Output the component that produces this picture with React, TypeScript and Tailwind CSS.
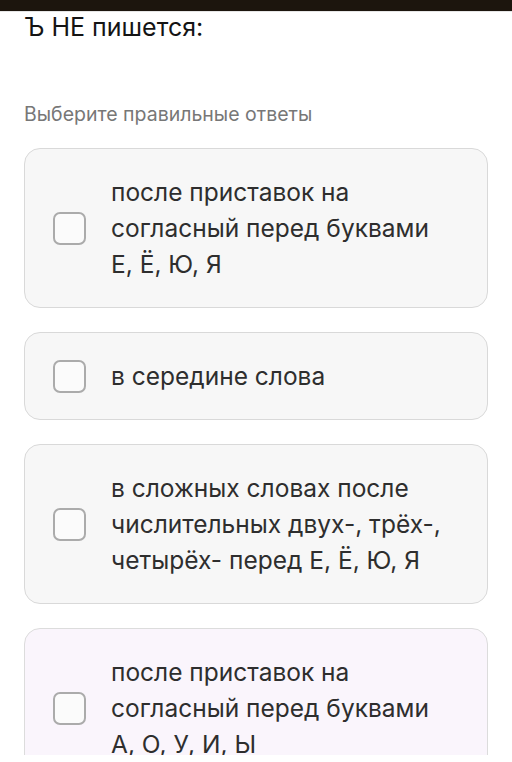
import React from "react";

interface Option {
  id: number;
  text: string;
  tinted?: boolean;
}

const options: Option[] = [
  { id: 1, text: "после приставок на согласный перед буквами Е, Ё, Ю, Я" },
  { id: 2, text: "в середине слова" },
  { id: 3, text: "в сложных словах после числительных двух-, трёх-, четырёх- перед Е, Ё, Ю, Я" },
  { id: 4, text: "после приставок на согласный перед буквами А, О, У, И, Ы", tinted: true },
];

const App: React.FC = () => {
  return (
    <div
      className="w-[512px] h-[762px] bg-white"
      style={{ fontFamily: "Inter, 'Noto Sans', sans-serif" }}
    >
      {/* status bar strip */}
      <div className="h-[11px] bg-[#1c150d]" />
      <div className="h-px bg-[#e6e6e6]" />

      <div className="h-[743px] overflow-hidden px-6">
        <h1 className="text-[25px] leading-[30px] text-[#141414]">Ъ НЕ пишется:</h1>

        <p className="mt-[60px] text-[19.5px] leading-[24px] text-[#777777]">Выберите правильные ответы</p>

        <div className="mt-[22px] flex flex-col gap-6">
          {options.map((o) => (
            <div
              key={o.id}
              className={`flex items-center rounded-2xl border pl-[28px] pr-6 py-[25px] ${
                o.tinted ? "bg-[#faf5fc] border-[#dcdcdc]" : "bg-[#f7f7f7] border-[#d9d9d9]"
              }`}
            >
              <div className="w-[33px] h-[33px] shrink-0 rounded-[7px] border-[2.5px] border-[#ababab] bg-[#fbfbfb]" />
              <div className="ml-[25px] min-h-[36px] flex items-center text-[24.5px] leading-[36px] text-[#2e2e2e]">
                <span className="max-w-[335px]">{o.text}</span>
              </div>
            </div>
          ))}
        </div>
      </div>
    </div>
  );
};

export default App;
